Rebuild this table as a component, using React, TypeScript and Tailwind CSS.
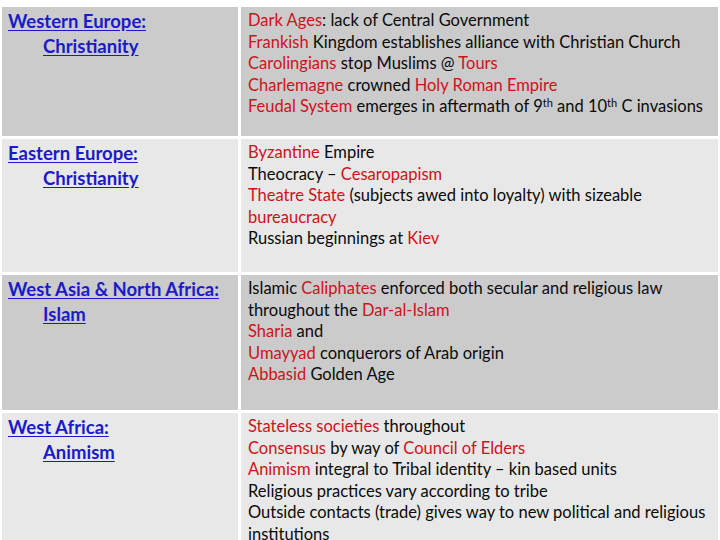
const R = ({ children }: { children: React.ReactNode }) => (
  <span className="text-[#d0111b]">{children}</span>
)

type Row = {
  region: string
  faith: string
  bg: string
  h: string
  lines: React.ReactNode[]
}

const rows: Row[] = [
  {
    region: "Western Europe:",
    faith: "Christianity",
    bg: "bg-[#cbcbcb]",
    h: "h-[129px]",
    lines: [
      <><R>Dark Ages</R>: lack of Central Government</>,
      <><R>Frankish</R> Kingdom establishes alliance with Christian Church</>,
      <><R>Carolingians</R> stop Muslims @ <R>Tours</R></>,
      <><R>Charlemagne</R> crowned <R>Holy Roman Empire</R></>,
      <>
        <R>Feudal System</R> emerges in aftermath of 9<sup className="text-[11px]">th</sup> and 10
        <sup className="text-[11px]">th</sup> C invasions
      </>,
    ],
  },
  {
    region: "Eastern Europe:",
    faith: "Christianity",
    bg: "bg-[#e8e8e8]",
    h: "h-[133px]",
    lines: [
      <><R>Byzantine</R> Empire</>,
      <>Theocracy – <R>Cesaropapism</R></>,
      <><R>Theatre State</R> (subjects awed into loyalty) with sizeable</>,
      <R>bureaucracy</R>,
      <>Russian beginnings at <R>Kiev</R></>,
    ],
  },
  {
    region: "West Asia & North Africa:",
    faith: "Islam",
    bg: "bg-[#cbcbcb]",
    h: "h-[135px]",
    lines: [
      <>Islamic <R>Caliphates</R> enforced both secular and religious law</>,
      <>throughout the <R>Dar-al-Islam</R></>,
      <><R>Sharia</R> and</>,
      <><R>Umayyad</R> conquerors of Arab origin</>,
      <><R>Abbasid</R> Golden Age</>,
    ],
  },
  {
    region: "West Africa:",
    faith: "Animism",
    bg: "bg-[#e8e8e8]",
    h: "h-[140px]",
    lines: [
      <><R>Stateless societies</R> throughout</>,
      <><R>Consensus</R> by way of <R>Council of Elders</R></>,
      <><R>Animism</R> integral to Tribal identity – kin based units</>,
      <>Religious practices vary according to tribe</>,
      <>Outside contacts (trade) gives way to new political and religious</>,
      <>institutions</>,
    ],
  },
]

export default function App() {
  return (
    <div className="h-[540px] w-[720px] overflow-hidden bg-white pl-[2px] pr-[2px] pt-[7px] font-['Lato','Open_Sans',sans-serif]">
      <div className="grid grid-cols-[236px_477px] gap-[3px]">
        {rows.map((row) => (
          <div key={row.region} className="contents">
            <div className={`${row.bg} ${row.h} pl-[6px] pt-[2px] text-[18.5px] font-bold leading-[25px] text-[#1a1acc]`}>
              <div className="underline underline-offset-2">{row.region}</div>
              <div className="pl-[35px]">
                <span className="underline underline-offset-2">{row.faith}</span>
              </div>
            </div>
            <div className={`${row.bg} ${row.h} overflow-hidden pl-[7px] pt-[3px] text-[16.5px] leading-[21.6px] text-[#0a0a0a]`}>
              {row.lines.map((line, i) => (
                <div key={i} className="whitespace-nowrap">
                  {line}
                </div>
              ))}
            </div>
          </div>
        ))}
      </div>
    </div>
  )
}
